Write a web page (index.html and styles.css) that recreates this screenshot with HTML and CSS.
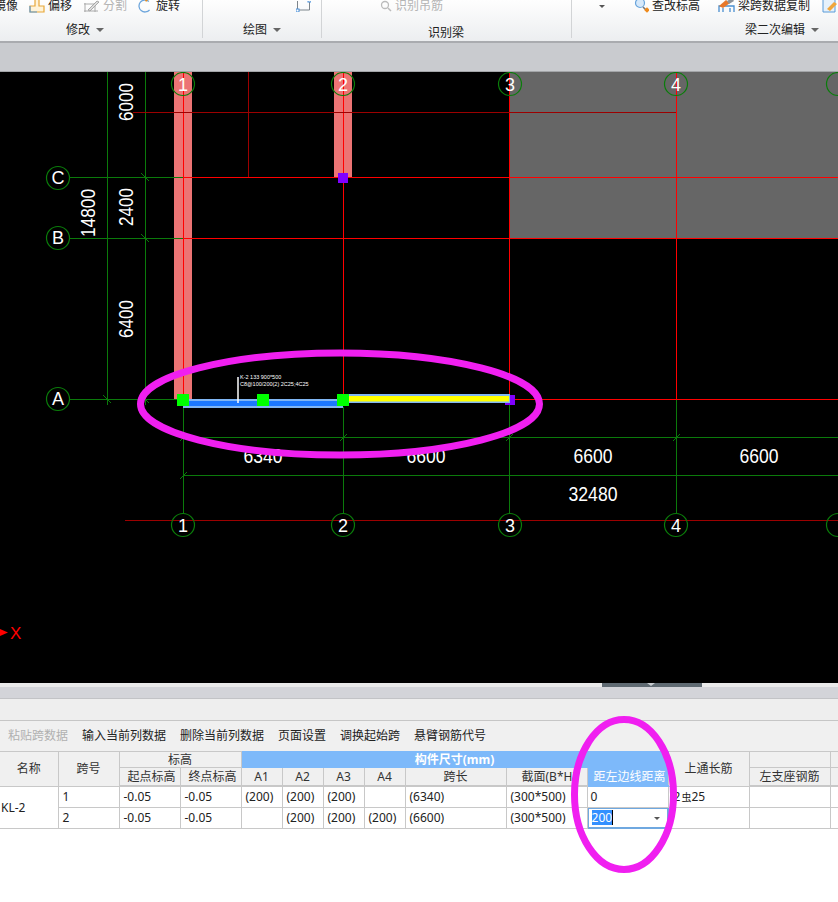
FILE: index.html
```html
<!DOCTYPE html>
<html lang="zh">
<head>
<meta charset="utf-8">
<title>梁二次编辑</title>
<link rel="stylesheet" href="styles.css">
</head>
<body>
<div class="page">
  <header class="ribbon">
    <section class="group g-modify">
      <div class="tools">
        <span class="tool first">镜像</span>
        <span class="tool"><svg class="ico" width="16" height="13" viewBox="0 0 16 13"><path d="M6 -3h4v9h5v6H1V6h5z" fill="#fff3d8" stroke="#e8a83a" stroke-width="1.2"/><path d="M1 6v6h7" fill="none" stroke="#5b9bd8" stroke-width="1.2"/></svg>偏移</span>
        <span class="tool off"><svg class="ico" width="17" height="13" viewBox="0 0 17 13"><path d="M1 4h12M1 11h14M2 3v9M12 3v9" stroke="#aaa" fill="none"/><path d="M5 10l9-9 2 1-9 9z" fill="#ddd" stroke="#999" stroke-width=".8"/></svg>分割</span>
        <span class="tool"><svg class="ico" width="15" height="14" viewBox="0 0 15 14"><path d="M7 1a6 6 0 1 0 6 6" fill="none" stroke="#6ea6dc" stroke-width="1.3" transform="rotate(40 7 7)"/><path d="M6 -1l5 1-3 3z" fill="#e88c1e"/></svg>旋转</span>
      </div>
      <div class="label">修改<i class="caret"></i></div>
    </section>
    <section class="group g-draw">
      <div class="tools end">
        <svg width="15" height="11" viewBox="0 0 15 11"><path d="M1.5 -2h12v11h-12z" fill="none" stroke="#7d858c"/><rect x="0" y="8" width="3" height="3" fill="#fff" stroke="#4a90d9"/><rect x="12" y="-2" width="3" height="3" fill="#fff" stroke="#4a90d9"/></svg>
      </div>
      <div class="label">绘图<i class="caret"></i></div>
    </section>
    <section class="group g-recog">
      <div class="tools">
        <span class="tool off"><svg class="ico" width="12" height="13" viewBox="0 0 12 13"><circle cx="5" cy="5" r="3.5" fill="none" stroke="#bbb" stroke-width="1.3"/><path d="M8 8l3 3" stroke="#bbb" stroke-width="1.5"/></svg>识别吊筋</span>
      </div>
      <div class="label lower">识别梁</div>
    </section>
    <section class="group g-edit">
      <div class="tools">
        <i class="caret small"></i>
        <span class="tool look"><svg class="ico" width="15" height="13" viewBox="0 0 15 13"><circle cx="6" cy="3" r="4.5" fill="#d6e9fb" stroke="#6aa5dc" stroke-width="1.2"/><path d="M9 7l3 3" stroke="#777" stroke-width="1.6"/><rect x="11" y="8" width="4" height="4" fill="#ee8a1c" transform="rotate(45 13 10)"/></svg>查改标高</span>
        <span class="tool copy"><svg class="ico" width="17" height="13" viewBox="0 0 17 13"><path d="M1 12V6h15v6M5 12V8M12 12V8" fill="none" stroke="#4a8fd0" stroke-width="1.3"/><path d="M1 6l7-6 4 3-7 5z" fill="#e8782a"/><path d="M9 1l5-3 2 3-5 3z" fill="#8d9298"/></svg>梁跨数据复制</span>
        <svg class="last" width="16" height="13" viewBox="0 0 16 13"><path d="M1 -2h12v14H1z" fill="#e6f1fb" stroke="#5a9bd8"/><path d="M5 9l7-7 3 2-7 7z" fill="#f0a63c"/></svg>
      </div>
      <div class="label right">梁二次编辑<i class="caret"></i></div>
    </section>
  </header>
  <div class="band"></div>

  <svg class="cad" width="838" height="611" viewBox="0 72 838 611">
    <rect class="slab" x="510" y="72" width="328" height="166"/>
    <rect class="col" x="174" y="72" width="18" height="328"/>
    <rect class="col" x="334" y="72" width="18" height="106"/>

    <g class="green">
      <path d="M107.500 72V405M145.500 72V405"/>
      <path d="M70 177.500H183M70 238.500H183M70 399.500H183"/>
      <path d="M183 437.500H838M183 475.500H838"/>
      <path d="M183.500 407V514M343.500 407V514M509.500 404V514M676.500 399V513"/>
    </g>
    <g class="tick">
      <path d="M141 173l8 8M141 234l8 8M103 395l8 8M141 395l8 8"/>
      <path d="M180 441l7-7M340 441l7-7M506 441l7-7M673 441l7-7M180 479l7-7"/>
    </g>
    <g class="red">
      <path d="M183.500 72V399M343.500 72V399M509.500 72V399M676.500 72V399"/>
      <path d="M183 177.500H838M183 238.500H838M510 399.500H838"/>
    </g>
    <g class="darkred">
      <path d="M133 112.500H676M248.500 72V177M125 520.500H838"/>
    </g>

    <g class="axis">
      <circle cx="183" cy="84" r="11.500"/><circle cx="343" cy="84" r="11.500"/><circle cx="510" cy="84" r="11.500"/><circle cx="676" cy="84" r="11.500"/><circle cx="838" cy="84" r="11.500"/>
      <circle cx="58" cy="178" r="11.500"/><circle cx="58" cy="238" r="11.500"/><circle cx="58" cy="399" r="11.500"/>
      <circle cx="183" cy="525" r="11.500"/><circle cx="343" cy="525" r="11.500"/><circle cx="510" cy="525" r="11.500"/><circle cx="676" cy="525" r="11.500"/><circle cx="838" cy="525" r="11.500"/>
    </g>
    <g class="axis-label">
      <text x="183" y="91">1</text><text x="343" y="91">2</text><text x="510" y="91">3</text><text x="676" y="91">4</text>
      <text x="58" y="184">C</text><text x="58" y="244">B</text><text x="58" y="405">A</text>
      <text x="183" y="532">1</text><text x="343" y="532">2</text><text x="510" y="532">3</text><text x="676" y="532">4</text>
    </g>
    <g class="dim">
      <text transform="translate(133 102) rotate(-90)" textLength="38" lengthAdjust="spacingAndGlyphs">6000</text>
      <text transform="translate(133 207) rotate(-90)" textLength="38" lengthAdjust="spacingAndGlyphs">2400</text>
      <text transform="translate(133 319) rotate(-90)" textLength="38" lengthAdjust="spacingAndGlyphs">6400</text>
      <text transform="translate(95 213) rotate(-90)" textLength="48" lengthAdjust="spacingAndGlyphs">14800</text>
      <text x="263" y="463" textLength="39" lengthAdjust="spacingAndGlyphs">6340</text>
      <text x="426" y="463" textLength="39" lengthAdjust="spacingAndGlyphs">6600</text>
      <text x="593" y="463" textLength="39" lengthAdjust="spacingAndGlyphs">6600</text>
      <text x="759" y="463" textLength="39" lengthAdjust="spacingAndGlyphs">6600</text>
      <text x="593" y="501" textLength="49" lengthAdjust="spacingAndGlyphs">32480</text>
    </g>

    <rect class="purple" x="338" y="173" width="10" height="10"/>
    <rect class="purple" x="505" y="395" width="10" height="10"/>
    <rect class="beam-edge" x="183" y="399" width="160" height="9"/>
    <rect class="beam-blue" x="183" y="401" width="160" height="5"/>
    <rect class="beam-edge" x="349" y="394" width="161" height="9"/>
    <rect class="beam-yellow" x="349" y="396" width="160" height="5.500"/>
    <rect class="handle" x="177" y="394" width="12" height="12"/>
    <rect class="handle" x="257" y="394" width="12" height="12"/>
    <rect class="handle" x="337" y="394" width="12" height="12"/>
    <path class="white-line" d="M238 377V403"/>
    <text class="tiny" x="240" y="379">K-2 133 900*500</text>
    <text class="tiny" x="240" y="386">C8@100/200(2) 2C25;4C25</text>

    <path class="x-arrow" d="M0 629l8 3.500-8 3.500z"/>
    <text class="x-mark" x="10" y="639">X</text>
  </svg>

  <div class="splitter"><span class="grip"><i></i></span></div>
  <div class="strip"></div>
  <div class="blank-bar"></div>
  <nav class="toolbar">
    <span class="off-text">粘贴跨数据</span>
    <span>输入当前列数据</span>
    <span>删除当前列数据</span>
    <span>页面设置</span>
    <span>调换起始跨</span>
    <span>悬臂钢筋代号</span>
  </nav>

  <table class="grid">
    <colgroup>
      <col class="c58"><col class="c61"><col class="c61"><col class="c61"><col class="c41"><col class="c41"><col class="c41"><col class="c41"><col class="c101"><col class="c81"><col class="c81"><col class="c81"><col class="c81"><col class="c8">
    </colgroup>
    <thead>
      <tr class="h1">
        <th rowspan="2">名称</th>
        <th rowspan="2">跨号</th>
        <th colspan="2">标高</th>
        <th colspan="7" class="blue strong">构件尺寸(mm)</th>
        <th rowspan="2">上通长筋</th>
        <th></th>
        <th></th>
      </tr>
      <tr class="h2">
        <th class="pad">起点标高</th>
        <th class="pad">终点标高</th>
        <th>A1</th>
        <th>A2</th>
        <th>A3</th>
        <th>A4</th>
        <th>跨长</th>
        <th class="clip">截面(B*H)</th>
        <th class="blue pad">距左边线距离</th>
        <th>左支座钢筋</th>
        <th></th>
      </tr>
    </thead>
    <tbody>
      <tr>
        <td rowspan="2" class="name">KL-2</td>
        <td>1</td><td>-0.05</td><td>-0.05</td><td>(200)</td><td>(200)</td><td>(200)</td><td></td><td>(6340)</td><td>(300*500)</td><td class="plain">0</td><td class="rebar">2<span class="bar-sym">虫</span>25</td><td></td><td></td>
      </tr>
      <tr>
        <td>2</td><td>-0.05</td><td>-0.05</td><td></td><td>(200)</td><td>(200)</td><td>(200)</td><td>(6600)</td><td>(300*500)</td>
        <td class="editing"><div class="edit-box"><span class="sel">200</span><i class="cursor"></i><i class="caret small drop"></i></div></td>
        <td></td><td></td><td></td>
      </tr>
    </tbody>
  </table>

  <svg class="marks" width="838" height="902" viewBox="0 0 838 902">
    <ellipse cx="340" cy="404" rx="199.500" ry="51"/>
    <ellipse cx="624" cy="794.500" rx="49.500" ry="75"/>
  </svg>
</div>
</body>
</html>
```

FILE: styles.css
```css
* { box-sizing: border-box; }
html, body { margin: 0; padding: 0; background: #fff; }
body { font: 12px/16px "Noto Sans", "Noto Sans CJK SC", sans-serif; color: #222; }
.page { position: relative; width: 838px; height: 902px; overflow: hidden; }

/* ribbon */
.ribbon {
  display: flex; height: 43px; overflow: hidden;
  background: linear-gradient(#fefefe, #eceef0);
  border-bottom: 2px solid #a9abaf;
}
.group { flex: none; display: flex; flex-direction: column; justify-content: space-between; height: 38px; border-right: 1px solid #d2d4d6; }
.g-modify { width: 203px; }
.g-draw { width: 119px; }
.g-recog { width: 250px; }
.g-edit { flex: 1 1 0; min-width: 0; border-right: 0; }
.tools { display: flex; align-items: center; height: 12px; }
.tool { display: inline-flex; align-items: center; white-space: nowrap; line-height: 12px; }
.ico { flex: none; margin-right: 3px; }
.g-modify .tools { gap: 11px; }
.first { margin-left: -6px; }
.off { color: #b4b4b4; }
.end { justify-content: flex-end; padding-right: 10px; }
.g-recog .tools { padding-left: 58px; }
.g-edit .tools { padding-left: 27px; }
.look { margin-left: 29px; }
.copy { margin-left: 18px; }
.last { margin-left: 12px; flex: none; }
.label { display: flex; align-items: center; justify-content: center; height: 16px; margin-top: 1px; }
.g-modify .label { padding-right: 32px; }
.lower { margin-bottom: -3px; padding-right: 1px; }
.label.right { justify-content: flex-start; padding-left: 173px; }
.caret { display: inline-block; width: 0; height: 0; margin-left: 6px; border: 4px solid transparent; border-top: 4px solid #666; border-bottom: 0; }
.caret.small { margin-left: 0; border-width: 3px; border-top-color: #555; border-bottom: 0; }
.band { height: 29px; background: #c9cbcf; border-bottom: 1px solid #a3a5a8; }

/* drawing */
.cad { display: block; background: #000; }
.cad path { fill: none; }
.slab { fill: #666; }
.col { fill: #ec7474; }
.green path { stroke: #0b7a0b; stroke-width: 1; }
.tick path { stroke: #0b7a0b; stroke-width: 1; }
.red path { stroke: #f00; stroke-width: 1; }
.darkred path { stroke: #9c0000; stroke-width: 1; }
.axis circle { fill: none; stroke: #0a7d0a; stroke-width: 1.200; }
.axis-label text { fill: #fff; font: 18px "Liberation Sans", sans-serif; text-anchor: middle; }
.dim text { fill: #fff; font: 20px "Liberation Sans", sans-serif; text-anchor: middle; }
.purple { fill: #8000ff; }
.beam-edge { fill: #80b6f4; }
.beam-blue { fill: #1c78ff; }
.beam-yellow { fill: #ff0; }
.handle { fill: #0f0; }
.cad .white-line { stroke: #fff; stroke-width: 1.500; }
.tiny { fill: #fff; font: 5.500px "Liberation Sans", sans-serif; }
.cad .x-arrow { fill: #f00; }
.x-mark { fill: #f00; font: 17px "Liberation Sans", sans-serif; }

/* panel */
.splitter { position: relative; height: 4px; background: #eaeaea; }
.grip { display: block; position: absolute; left: 602px; top: 0; width: 100px; height: 4px; background: #5f6a72; }
.grip i { position: absolute; left: 45px; top: 0; border: 4px solid transparent; border-top: 3px solid #c8ccd0; border-bottom: 0; }
.strip { height: 12px; background: #d3d4d9; border-bottom: 1px solid #c2c3c6; }
.blank-bar { height: 22px; background: #eeeeee; border-bottom: 1px solid #c6c6c6; }
.toolbar { display: flex; align-items: center; gap: 14px; height: 30px; padding-left: 8px; background: #f0f0f0; }
.off-text { color: #b0b0b0; }

.grid { table-layout: fixed; border-collapse: collapse; width: 838px; background: #fff; }
.c58 { width: 58px; } .c61 { width: 61px; } .c41 { width: 41px; } .c101 { width: 101px; } .c81 { width: 81px; } .c8 { width: 8px; }
.grid th, .grid td { border: 1px solid #c8c8c8; padding: 0; overflow: hidden; white-space: nowrap; }
.grid th { font-weight: 400; background: #f0f0f0; text-align: center; color: #333; }
.h1 th { height: 16px; line-height: 15px; }
.h2 th { height: 18px; line-height: 17px; border-bottom: 2px solid #c8c8c8; }
.grid th.blue { background: #7db9fa; color: #fff; border-color: #7db9fa; }
.grid th.strong { font-weight: 700; }
.grid th.clip { text-align: left; padding-left: 15px; }
.grid th.pad { padding-left: 4px; }
.grid td { height: 21px; padding-left: 4px; line-height: 19px; }
.grid td.plain { padding-left: 3px; }
.grid td.name { padding-left: 1px; border-left: 0; }
.grid th:first-child { border-left: 0; }
.grid td.rebar { padding-left: 5px; }
.bar-sym { font-size: 10px; margin: 0 0 0 1px; }
.grid td.editing { padding: 0; border: 1px solid #6fa8e0; }
.edit-box { position: relative; display: flex; align-items: center; height: 20px; padding-left: 3px; border: 1px solid #6fa8e0; background: #fff; }
.sel { background: #3390ff; color: #fff; line-height: 15px; }
.cursor { width: 1px; height: 15px; background: #000; }
.drop { position: absolute; right: 7px; top: 8px; }
.marks { position: absolute; left: 0; top: 0; pointer-events: none; }
.marks ellipse { fill: none; stroke: #f01ff0; stroke-width: 7; }
```
